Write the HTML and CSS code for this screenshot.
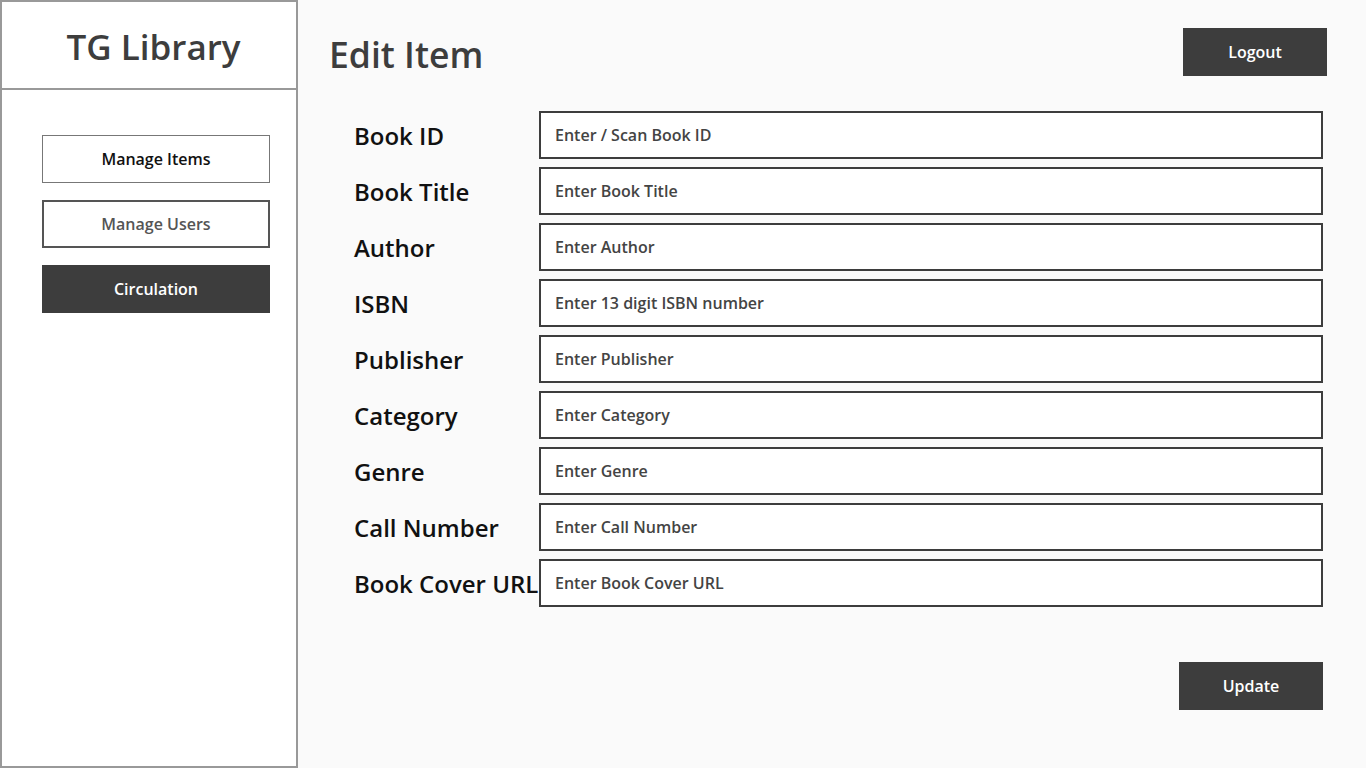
FILE: index.html
```html
<!DOCTYPE html>
<html lang="en">
<head>
<meta charset="utf-8">
<title>Edit Item - TG Library</title>
<link rel="stylesheet" href="styles.css">
</head>
<body>
<div class="app">
  <aside class="sidebar">
    <div class="brand">TG Library</div>
    <nav class="nav">
      <button class="nav-btn nav-thin">Manage Items</button>
      <button class="nav-btn nav-thick">Manage Users</button>
      <button class="nav-btn nav-dark">Circulation</button>
    </nav>
  </aside>
  <main class="main">
    <header class="topbar">
      <h1 class="title">Edit Item</h1>
      <button class="dark-btn">Logout</button>
    </header>
    <form class="form">
      <div class="row"><label class="label">Book ID</label><div class="field">Enter / Scan Book ID</div></div>
      <div class="row"><label class="label">Book Title</label><div class="field">Enter Book Title</div></div>
      <div class="row"><label class="label">Author</label><div class="field">Enter Author</div></div>
      <div class="row"><label class="label">ISBN</label><div class="field">Enter 13 digit ISBN number</div></div>
      <div class="row"><label class="label">Publisher</label><div class="field">Enter Publisher</div></div>
      <div class="row"><label class="label">Category</label><div class="field">Enter Category</div></div>
      <div class="row"><label class="label">Genre</label><div class="field">Enter Genre</div></div>
      <div class="row"><label class="label">Call Number</label><div class="field">Enter Call Number</div></div>
      <div class="row"><label class="label">Book Cover URL</label><div class="field">Enter Book Cover URL</div></div>
      <div class="actions"><button type="button" class="dark-btn">Update</button></div>
    </form>
  </main>
</div>
</body>
</html>
```
FILE: styles.css
```css
* { box-sizing: border-box; }
html, body { margin: 0; padding: 0; }
body {
  font-family: "Open Sans", "Noto Sans", sans-serif;
  background: #fafafa;
  color: #3d3d3d;
}
.app {
  display: flex;
  width: 1366px;
  height: 768px;
}
.sidebar {
  width: 298px;
  flex: none;
  background: #fff;
  border: 2px solid #999;
  display: flex;
  flex-direction: column;
}
.brand {
  height: 88px;
  border-bottom: 2px solid #999;
  display: flex;
  align-items: center;
  justify-content: center;
  font-size: 35px;
  font-weight: 600;
  color: #3d3d3d;
  padding-left: 9px;
  padding-top: 2px;
}
.nav {
  display: flex;
  flex-direction: column;
  gap: 17px;
  padding: 45px 26px 0 40px;
}
.nav-btn {
  font-family: inherit;
  height: 48px;
  width: 228px;
  font-size: 16px;
  font-weight: 600;
  background: #fff;
  cursor: pointer;
}
.nav-thin { border: 1px solid #777; color: #111; }
.nav-thick { border: 2px solid #555; color: #555; }
.nav-dark { border: none; background: #3d3d3d; color: #fff; }
.main {
  flex: 1;
  padding: 28px 39px 0 31px;
}
.topbar {
  display: flex;
  justify-content: space-between;
  align-items: flex-start;
}
.title {
  margin: 0;
  font-size: 35.5px;
  font-weight: 600;
  line-height: 52px;
  color: #3d3d3d;
}
.dark-btn {
  font-family: inherit;
  width: 144px;
  height: 48px;
  border: none;
  background: #3d3d3d;
  color: #fff;
  font-size: 16px;
  font-weight: 600;
  cursor: pointer;
}
.form {
  margin: 31px 4px 0 25px;
  display: flex;
  flex-direction: column;
  gap: 8px;
}
.row {
  display: flex;
  align-items: center;
  height: 48px;
}
.label {
  width: 185px;
  flex: none;
  font-size: 24px;
  font-weight: 600;
  color: #111;
  white-space: nowrap;
  padding-top: 1px;
}
.field {
  flex: 1;
  height: 48px;
  border: 2px solid #3d3d3d;
  background: #fff;
  display: flex;
  align-items: center;
  padding-left: 14px;
  font-size: 16px;
  font-weight: 600;
  color: #444;
}
.actions {
  display: flex;
  justify-content: flex-end;
  margin-top: 47px;
}
```
